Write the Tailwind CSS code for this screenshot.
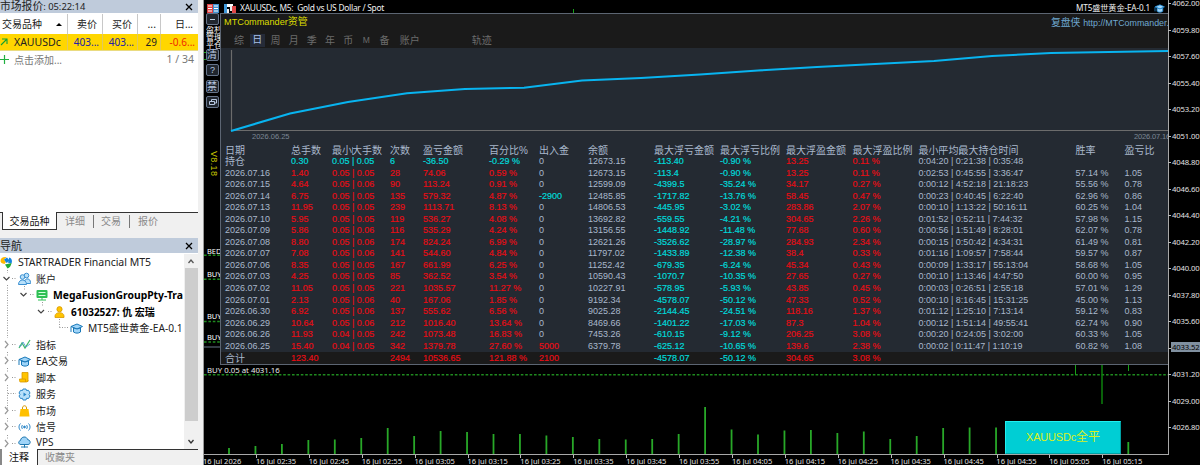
<!DOCTYPE html>
<html lang="zh-CN">

<head>
  <meta charset="UTF-8">
  <meta name="viewport" content="width=device-width, initial-scale=1.0">
  <title>XAUUSDc, M5 - STARTRADER Financial MT5</title>
  <script src="https://cdn.jsdelivr.net/npm/@tailwindcss/browser@4"></script>
</head>

<body class="w-[1200px] h-[465px] overflow-hidden bg-[#f0f0f0] flex font-['Noto_Sans','Noto_Sans_CJK_SC',sans-serif] text-[10.5px] leading-none text-[#222] whitespace-nowrap">

  <!-- left side: market watch + navigator -->
  <aside class="w-[203px] h-full shrink-0 flex flex-col bg-[#f0f0f0]">
    <div class="w-[198px] h-[13px] shrink-0 bg-[#bfcbdb] flex items-center justify-between pr-1">
      <span class="h-[11px] flex items-center text-[#222]"><span class="text-[10.8px] -mt-px">市场报价</span><span class="text-[9.4px]">: 05:22:14</span></span>
      <svg class="w-[8px] h-[8px] mr-px" viewBox="0 0 8 8" stroke="#000" stroke-width="1.3"><path d="M1 1l6 6M7 1l-6 6"/></svg>
    </div>
    <div class="w-[198px] h-[199px] shrink-0 bg-white">
      <div class="h-[21px] grid grid-cols-[68px_35px_35px_23px_36px] items-stretch text-[#222] pt-px">
        <div class="flex items-center justify-between pl-[2px] pr-[5px] border-r border-[#c8c8c8] text-[10px]">交易品种<svg class="w-[6px] h-[3px]" viewBox="0 0 6 3"><path d="M0 3l3-3 3 3z" fill="#000"/></svg></div>
        <div class="flex items-center justify-end pr-[5px] border-r border-[#c8c8c8] text-[10px]">卖价</div>
        <div class="flex items-center justify-end pr-[5px] border-r border-[#c8c8c8] text-[10px]">买价</div>
        <div class="flex items-center justify-end pr-[4px] border-r border-[#c8c8c8]">...</div>
        <div class="flex items-center justify-end pr-[4px] text-[10px]">日...</div>
      </div>
      <div class="h-[17px] grid grid-cols-[68px_35px_35px_23px_37px] bg-[#ffd600] border-b border-[#eadb80]">
        <div class="flex items-center border-r border-[#e0c860]">
          <svg class="w-[8px] h-[8px] mr-[6px]" viewBox="0 0 8 8" fill="none" stroke="#15a030" stroke-width="1.1"><path d="M1 7l6-6M2 1h5v5"/></svg>
          <span>XAUUSDc</span>
        </div>
        <div class="flex items-center justify-end pr-[3px] border-r border-[#e0c860] text-[#2020a8] text-[10px]">403...</div>
        <div class="flex items-center justify-end pr-[3px] border-r border-[#e0c860] text-[#2020a8] text-[10px]">403...</div>
        <div class="flex items-center justify-end pr-[3px] border-r border-[#e0c860] text-[10px]">29</div>
        <div class="flex items-center justify-end pr-[3px] text-[#f02800] text-[10px]">-0.6...</div>
      </div>
      <div class="h-[17px] flex items-center text-[#777]">
        <svg class="w-[9px] h-[9px] mr-[5px]" viewBox="0 0 9 9" stroke="#20b040" stroke-width="1.2"><path d="M0 4.500h9M4.500 0v9"/></svg>
        <span class="text-[10px]">点击添加...</span>
        <span class="ml-auto pr-[4px]">1 / 34</span>
      </div>
    </div>
    <div class="h-[26px] shrink-0 flex items-start text-[10px] text-[#8a8a8a]">
      <div class="w-[2px] h-px bg-[#333]"></div>
      <div class="w-[55px] h-[18px] bg-white border-x border-b border-[#333] text-[#111] flex items-center justify-center">交易品种</div>
      <div class="w-[141px] h-[18px] border-t border-[#333] flex items-center pl-[8px]">
        <span class="w-[29px] h-[13px] border-r border-[#777] leading-[12px]">详细</span>
        <span class="w-[36px] h-[13px] border-r border-[#777] leading-[12px] pl-[7px]">交易</span>
        <span class="pl-[8px] h-[13px] leading-[12px]">报价</span>
      </div>
    </div>

    <div class="w-[198px] h-[15px] shrink-0 bg-[#bfcbdb] flex items-center justify-between pr-1 text-[#222]">
      <span class="text-[11px]">导航</span>
      <svg class="w-[8px] h-[8px] mr-px" viewBox="0 0 8 8" stroke="#000" stroke-width="1.300"><path d="M1 1l6 6M7 1l-6 6"/></svg>
    </div>
    <div class="w-[198px] h-[196px] shrink-0 pt-px flex bg-white">
      <div class="relative w-[184px] h-[195px] overflow-hidden text-[#222]">
        <svg class="absolute left-0 top-0 w-[80px] h-[195px]" fill="none" stroke="#999" stroke-dasharray="1 1.500">
          <path d="M7.500 16v3M7.500 31V84M7.500 98v4M7.500 114v4M7.500 131v24M7.500 164v4M7.500 181v4M24.500 32v4M42.500 48v4M59.500 65v9M59.500 73.500H69M12 24.500h5M30 40.500h4M48 57.500h4M12 90.500h5M12 106.500h5M12 123.500h5M8 139.500h8M12 156.500h5M12 172.500h5M12 189.500h5"/>
        </svg>
        <svg class="absolute left-0 top-0 w-[60px] h-[195px]" fill="none" stroke="#444" stroke-width="1.200">
          <path d="M3.500 23l3 3 3-3M20.500 39l3 3 3-3M38 56l3 3 3-3"/>
          <path stroke="#999" d="M5 87l3 3.500-3 3.500M5 103l3 3.500-3 3.500M5 120l3 3.500-3 3.500M5 153l3 3.500-3 3.500M5 169l3 3.500-3 3.500M5 186l3 3.500-3 3.500"/>
        </svg>
        <div class="h-[16.500px] flex items-center gap-[5px]">
          <svg class="w-[13px] h-[13px]" viewBox="0 0 13 13"><path d="M.5 5C.5 2 3 .500 6.500 1L4 3.500 6 6 4.500 8C2 7.500.5 6.500.5 5z" fill="#ffb800"/><path d="M4 3.500L7 1.500l2.500 3L6.500 7z" fill="#1484e0"/><path d="M7.500 6.500C9.500 5 8 3 9.500 1.500c2.500 1 3 3.500 2 6z" fill="#1484e0"/><path d="M5 8.500l6.500-1.500C11 10 9.500 12 7.500 12.500z" fill="#20a838"/></svg>
          <span class="tracking-[-0.020px]">STARTRADER Financial MT5</span>
        </div>
        <div class="h-[16.500px] flex items-center gap-[5px] pl-[18px]">
          <svg class="w-[13px] h-[13px]" viewBox="0 0 13 13" fill="#b8e0fa" stroke="#3a8fd0"><circle cx="8.500" cy="3.500" r="2.300"/><path d="M6 11.500c0-6 6.500-6 6.500-1v1z"/><circle cx="4.500" cy="5" r="2.300"/><path d="M.5 12.500c0-6 8-6 8 0z"/></svg>
          <span class="text-[10px]">账户</span>
        </div>
        <div class="h-[16.500px] flex items-center gap-[5px] pl-[36px]">
          <svg class="w-[12px] h-[12px]" viewBox="0 0 12 12"><rect x=".5" y="1" width="11" height="8" rx="1" fill="#2fc055"/><path d="M2.500 3.500h7M2.500 6.500h7" stroke="#d8ffe0"/><path d="M6 9v2M2 11h8" stroke="#2fc055"/></svg>
          <span class="font-bold text-black text-[10.350px]">MegaFusionGroupPty-Tra</span>
        </div>
        <div class="h-[16.500px] flex items-center gap-[6px] pl-[54px]">
          <svg class="w-[11px] h-[12px]" viewBox="0 0 11 12" fill="#ffc400" stroke="#d89800" stroke-width=".8"><circle cx="5.500" cy="3.200" r="2.600"/><path d="M1 11.500V10c0-4.500 9-4.500 9 0v1.500z"/></svg>
          <span class="font-bold text-black text-[10px]">61032527: 仇 宏瑞</span>
        </div>
        <div class="h-[16.500px] flex items-center gap-[5px] pl-[70px]">
          <svg class="w-[13px] h-[11px]" viewBox="0 0 13 11" fill="#9fd4f8" stroke="#1878b8"><path d="M1 3.500L7 1l5.500 2.500L7 6z"/><path d="M3.500 5v4c2 1.500 5 1.500 7 0V5L7 6zM1 3.500V9"/></svg>
          <span class="text-[10.200px]">MT5盛世黄金-EA-0.1</span>
        </div>
        <div class="h-[16.500px] flex items-center gap-[5px] pl-[18px]">
          <svg class="w-[13px] h-[11px]" viewBox="0 0 13 11" fill="none" stroke-width="1.200"><path d="M1 9l3-5 3 5 5-8" stroke="#40b868"/><path d="M1 7h2l2-4 3 5 4-3" stroke="#4898d0" stroke-width=".8"/></svg>
          <span class="text-[10px]">指标</span>
        </div>
        <div class="h-[16.500px] flex items-center gap-[5px] pl-[18px]">
          <svg class="w-[13px] h-[11px]" viewBox="0 0 13 11" fill="#9fd4f8" stroke="#1878b8"><path d="M1 3.500L7 1l5.500 2.500L7 6z"/><path d="M3.500 5v4c2 1.500 5 1.500 7 0V5L7 6zM1 3.500V9"/></svg>
          <span class="text-[10px]">EA交易</span>
        </div>
        <div class="h-[16.500px] flex items-center gap-[5px] pl-[18px]">
          <svg class="w-[13px] h-[11px]" viewBox="0 0 13 11" fill="#ffc400" stroke="#d89800" stroke-width=".8"><path d="M4 .500h6v9H4z"/><path d="M1.500 7h6v3H2.500c-1 0-1-1-1-3zM7.500 10c2 0 2.500-.5 2.500-2"/></svg>
          <span class="text-[10px]">脚本</span>
        </div>
        <div class="h-[16.500px] flex items-center gap-[5px] pl-[18px]">
          <svg class="w-[13px] h-[13px]" viewBox="0 0 13 13" fill="#b8e0fa" stroke="#2a86c8"><path d="M5 1h3l.5 1.500 2-.2L12 5l-1 1.500L12 8l-1.500 2.500-2-.2L8 12H5l-.5-1.700-2 .2L1 8l1-1.500L1 5l1.500-2.700 2 .2z"/><path d="M5.500 4.500l3 2-3 2z" fill="#2a86c8" stroke="none"/></svg>
          <span class="text-[10px]">服务</span>
        </div>
        <div class="h-[16.500px] flex items-center gap-[5px] pl-[18px]">
          <svg class="w-[13px] h-[12px]" viewBox="0 0 13 12"><path d="M4.500 5V3c0-3 4-3 4 0v2" fill="none" stroke="#d89800"/><path d="M2.500 4h8l1 7.500h-10z" fill="#ffc000"/></svg>
          <span class="text-[10px]">市场</span>
        </div>
        <div class="h-[16.500px] flex items-center gap-[5px] pl-[18px]">
          <svg class="w-[13px] h-[10px]" viewBox="0 0 13 10" fill="none" stroke="#2a86c8"><path d="M2.500 1.500c-2 2-2 5 0 7M10.500 1.500c2 2 2 5 0 7M4.500 3c-1 1-1 3 0 4M8.500 3c1 1 1 3 0 4"/><circle cx="6.500" cy="5" r=".9" fill="#2a86c8"/></svg>
          <span class="text-[10px]">信号</span>
        </div>
        <div class="h-[13px] flex items-center gap-[5px] pl-[18px]">
          <svg class="w-[13px] h-[12px]" viewBox="0 0 13 12" fill="#9fd4f8" stroke="#2078b0"><path d="M3 8.500C0 8.500 0 5 2.500 4.500 3 0 9 0 9.500 3.500 13 4 13 8.500 10 8.500z"/><path d="M6.500 8.500v3M3 11h7"/></svg>
          <span class="text-[10px]">VPS</span>
        </div>
      </div>
      <div class="w-[14px] h-[195px] bg-[#f0f0f0] flex flex-col items-center">
        <svg class="w-[6px] h-[14px]" viewBox="0 0 6 14" fill="none" stroke="#555" stroke-width="1.300"><path d="M.5 9L3 6l2.500 3"/></svg>
        <div class="w-[13px] h-[153px] bg-[#cdcdcd]"></div>
        <svg class="w-[6px] h-[14px] mt-auto" viewBox="0 0 6 14" fill="none" stroke="#333" stroke-width="1.300"><path d="M.5 5L3 8l2.500-3"/></svg>
      </div>
    </div>
    <div class="h-[16px] shrink-0 flex text-[10px]">
      <div class="w-[38px] pl-[7px] bg-white border-r border-[#333] border-l-2 border-l-[#888] text-[#111] leading-[16px]">注释</div>
      <div class="w-[160px] border-t border-[#333] pl-[7px] leading-[15px] text-[#8a8a8a]">收藏夹</div>
    </div>
  </aside>

  <!-- chart window -->
  <main class="relative w-[997px] h-full bg-black flex flex-col border-l border-[#999] font-['Liberation_Sans','Noto_Sans_CJK_SC',sans-serif]">
    <!-- candles, volumes and order lines under the panel -->
    <svg id="plot" class="absolute left-0 top-0 w-[996px] h-[465px]" viewBox="204 0 996 465">
      <g stroke="#1f8a1f" stroke-width="1.500" stroke-dasharray="2.600 1.800">
        <path d="M204 374.800H1168M204 255.300h16M204 279.300h16M204 321.500h16M204 342h16"/>
      </g>
      <path d="M204 52.500h3M204 59.500h3" stroke="#18a018"/>
      <path d="M203 347h17" stroke="#667788"/>
      <path d="M1075.500 364v11M1128.500 364v7M573.500 9v4" stroke="#18a018"/>
      <path d="M1102 364v40" stroke="#0c800c" stroke-width="1.500"/>
      <path d="M1168 0V454.500M204 454.500h964" stroke="#a8a8a8" shape-rendering="crispEdges"/>
      <g id="volumes" stroke="#28a828" stroke-width="1.800"></g>
      <g id="ticks" stroke="#bbb" shape-rendering="crispEdges"></g>
    </svg>

    <header class="relative h-[13px] w-[964px] flex items-center pl-[3px] text-[#f0f0f0] font-['Noto_Sans','Noto_Sans_CJK_SC',sans-serif]">
      <svg class="w-[12px] h-[9px] mt-[3px]" viewBox="0 0 12 9"><path d="M0 0h6v9H0z" fill="#e04040"/><path d="M6 0h6v9H6z" fill="#4090d0"/><path d="M1 2h4M1 4.500h4M1 7h4M7 2h4M7 4.500h4M7 7h4" stroke="#fff"/></svg>
      <svg class="w-[12px] h-[9px] mt-[3px] ml-[5px]" viewBox="0 0 12 9"><path d="M0 0h3v9H0z" fill="#4098d8"/><path d="M3 0h6v3H3z" fill="#fff"/><path d="M8 2h4v7H8z" fill="#e04848"/><path d="M3 5h2v4H3zM6 2h2v5H6z" fill="#eee"/></svg>
      <span class="ml-[4px] mt-[4px] text-[8.400px] tracking-[-0.250px]">XAUUSDc, M5:&nbsp; Gold vs US Dollar / Spot</span>
      <span class="ml-auto mt-[4px] text-[8.200px] tracking-[-0.150px]">MT5盛世黄金-EA-0.1</span>
      <svg class="w-[11px] h-[9px] ml-[4px] mr-[3px] mt-[4px]" viewBox="0 0 13 11" fill="#9fd4f8" stroke="#2088d0"><path d="M1 3.500L7 1l5.500 2.500L7 6z"/><path d="M3.500 5v4c2 1.500 5 1.500 7 0V5L7 6zM1 3.500V9"/></svg>
    </header>

    <!-- tool strip at the left of the panel -->
    <div class="absolute left-[2px] top-[13px] w-[14px] h-[100px] text-[#b8c8e0]">
      <div class="w-[13px] h-[12px] border border-[#66748a] rounded-xs bg-[#20262e] flex items-center justify-center"><svg class="w-[5px] h-px bg-[#c0d0e0]"></svg></div>
      <div class="w-[14px] h-[23px] mt-px overflow-hidden text-[8px] leading-[8px] text-white">盈利<br>管理<br>平仓</div>
      <div class="w-[13px] h-[12px] border border-[#66748a] rounded-xs bg-[#20262e] text-[10px] leading-[10px]">清</div>
      <div class="w-[13px] h-[12px] mt-[3px] border border-[#66748a] rounded-xs bg-[#20262e] text-[9px] leading-[10px] text-center">?</div>
      <div class="w-[13px] h-[13px] mt-[4px] border border-[#66748a] rounded-xs bg-[#20262e] text-[10px] leading-[11px]">禁</div>
      <div class="w-[13px] h-[12px] mt-[3px] border border-[#66748a] rounded-xs bg-[#20262e] flex items-center justify-center"><svg class="w-[8px] h-[8px]" viewBox="0 0 8 8" fill="none" stroke="#b8c8e0"><path d="M.5 3.500h5v3h-5zM2.500 3V1.500h5v3.500H6"/></svg></div>
    </div>
    <div class="absolute left-[5px] top-[151px] text-[#c8c800] text-[9px] tracking-[0.350px] [writing-mode:vertical-rl]">V8.18</div>
    <div class="absolute left-[3px] top-[247px] w-[13px] overflow-hidden text-[7.500px] text-white font-['Noto_Sans',sans-serif] leading-[8px]">BED</div>
    <div class="absolute left-[3px] top-[270px] w-[13px] overflow-hidden text-[7.500px] text-white font-['Noto_Sans',sans-serif] leading-[8px]">BUY</div>
    <div class="absolute left-[3px] top-[312px] w-[13px] overflow-hidden text-[7.500px] text-white font-['Noto_Sans',sans-serif] leading-[8px]">BUY</div>
    <div class="absolute left-[3px] top-[333px] w-[13px] overflow-hidden text-[7.500px] text-white font-['Noto_Sans',sans-serif] leading-[8px]">BUY</div>
    <div class="absolute left-[3px] top-[366px] text-[7.800px] text-[#e8e8e8] font-['Noto_Sans',sans-serif] leading-[8px]">BUY 0.05 at 4031.16</div>

    <!-- account panel -->
    <section class="relative ml-[16px] w-[948px] h-[352px] border-l border-y border-[#5c6572] bg-[#242a32] flex flex-col overflow-hidden text-[#a9b8cc]">
      <div class="h-[34px] shrink-0 bg-[#1a1a1a]">
        <div class="h-[17px] flex items-center justify-between pl-[3px]">
          <span class="text-[#dede00] text-[10px]"><span class="text-[9.200px]">MTCommander</span>资管</span>
          <span class="w-[117px] overflow-hidden text-[#6fa8d0] text-[9.800px] leading-[14px]">复盘侠 <span class="text-[8.900px]">http://MTCommander.com</span></span>
        </div>
        <nav class="h-[19px] flex items-center text-[#6c6c6c] text-[10px] pl-[9px]">
          <span class="w-[18.200px] text-center">综</span>
          <span class="w-[18.200px] flex justify-center"><span class="w-[15px] h-[13px] leading-[12px] text-center bg-[#252b38] text-[#a8c0e8]">日</span></span>
          <span class="w-[18.200px] text-center">周</span>
          <span class="w-[18.200px] text-center">月</span>
          <span class="w-[18.200px] text-center">季</span>
          <span class="w-[18.200px] text-center">年</span>
          <span class="w-[18.200px] text-center">币</span>
          <span class="w-[18.200px] text-center text-[8.500px]">M</span>
          <span class="w-[18.200px] text-center">备</span>
          <span class="ml-[6px]">账户</span>
          <span class="ml-[52px]">轨迹</span>
        </nav>
      </div>
      <svg class="w-[947px] h-[85px] shrink-0" viewBox="221 48 947 85" fill="none">
        <path d="M231.500 50V130.500H1168" stroke="#6c6c6c" stroke-width="1.200"/>
        <polyline stroke="#08b4f0" stroke-width="2.100" points="231,131 290,113.500 348,102 407,93.300 465,89 524,87.700 582,80.500 641,78 700,74.500 758,70.500 817,67 875,64 934,61 992,56 1051,53 1109,52 1168,51"/>
      </svg>
      <div class="h-[12px] shrink-0 flex justify-between pl-[31px] text-[7.500px] leading-[8px] text-[#7d8896]"><span>2026.06.25</span><span class="w-[34px] overflow-hidden tracking-[-0.150px]">2026.07.16</span></div>
      <div id="head" class="h-[11px] shrink-0 pl-[4px] grid grid-cols-[66px_41px_58px_33px_66px_50px_49px_66px_66px_66px_66.500px_66px_157px_49px_40px] items-center text-[10px] leading-[11px]"></div>
      <div id="rows" class="text-[9px]"></div>
    </section>

    <button class="absolute left-[801px] top-[421px] w-[116px] h-[33px] bg-[#00ced4] border-t border-l border-[#20f0f0] border-r border-b border-r-[#00a0a4] border-b-[#00a0a4] text-[#d8f020] text-[12px] leading-[31px]"><span class="text-[11px] tracking-[-0.200px]">XAUUSDc</span>全平</button>

    <div id="prices" class="absolute left-[968px] top-[-10px] text-[#e0e0e0] text-[7.700px] tracking-[-0.150px] font-['Noto_Sans',sans-serif]"></div>
    <div class="absolute left-[967px] top-[342px] w-[29px] h-[10px] bg-[#8090a0] text-black pl-px text-[7.700px] tracking-[-0.150px] leading-[10px] font-['Noto_Sans',sans-serif]">4033.52</div>
    <div id="times" class="absolute left-[-1px] top-[456px] h-[9px] flex text-[#e0e0e0] text-[7.500px] leading-[10px] font-['Noto_Sans',sans-serif]"></div>
  </main>
</body>
<script>
  const $ = (tag) => document.querySelector(tag);

  const titles = ['日期', '总手数', '最小|大手数', '次数', '盈亏金额', '百分比%', '出入金', '余额', '最大浮亏金额', '最大浮亏比例', '最大浮盈金额', '最大浮盈比例', '最小|平均|最大持仓时间', '胜率', '盈亏比'];
  const days = [
    ['持仓', '0.30', '0.05 | 0.05', '6', '-36.50', '-0.29 %', '0', '12673.15', '-113.40', '-0.90 %', '13.25', '0.11 %', '0:04:20 | 0:21:38 | 0:35:48', '', ''],
    ['2026.07.16', '1.40', '0.05 | 0.05', '28', '74.06', '0.59 %', '0', '12673.15', '-113.4', '-0.90 %', '13.25', '0.11 %', '0:02:53 | 0:45:55 | 3:36:47', '57.14 %', '1.05'],
    ['2026.07.15', '4.64', '0.05 | 0.06', '90', '113.24', '0.91 %', '0', '12599.09', '-4399.5', '-35.24 %', '34.17', '0.27 %', '0:00:12 | 4:52:18 | 21:18:23', '55.56 %', '0.78'],
    ['2026.07.14', '6.75', '0.05 | 0.05', '135', '579.32', '4.87 %', '-2900', '12485.85', '-1717.82', '-13.76 %', '58.45', '0.47 %', '0:00:23 | 0:40:45 | 6:22:40', '62.96 %', '0.86'],
    ['2026.07.13', '11.95', '0.05 | 0.05', '239', '1113.71', '8.13 %', '0', '14806.53', '-445.95', '-3.02 %', '283.86', '2.07 %', '0:00:10 | 1:13:22 | 50:16:11', '60.25 %', '1.04'],
    ['2026.07.10', '5.95', '0.05 | 0.05', '119', '536.27', '4.08 %', '0', '13692.82', '-559.55', '-4.21 %', '304.65', '2.26 %', '0:01:52 | 0:52:11 | 7:44:32', '57.98 %', '1.15'],
    ['2026.07.09', '5.86', '0.05 | 0.06', '116', '535.29', '4.24 %', '0', '13156.55', '-1448.92', '-11.48 %', '77.68', '0.60 %', '0:00:56 | 1:51:49 | 8:28:01', '62.07 %', '0.78'],
    ['2026.07.08', '8.80', '0.05 | 0.06', '174', '824.24', '6.99 %', '0', '12621.26', '-3526.62', '-28.97 %', '284.93', '2.34 %', '0:00:15 | 0:50:42 | 4:34:31', '61.49 %', '0.81'],
    ['2026.07.07', '7.08', '0.05 | 0.06', '141', '544.60', '4.84 %', '0', '11797.02', '-1433.89', '-12.38 %', '38.4', '0.33 %', '0:01:16 | 1:09:57 | 7:58:44', '59.57 %', '0.87'],
    ['2026.07.06', '8.35', '0.05 | 0.05', '167', '661.99', '6.25 %', '0', '11252.42', '-679.35', '-6.24 %', '45.34', '0.43 %', '0:00:09 | 1:33:17 | 55:13:04', '58.68 %', '1.05'],
    ['2026.07.03', '4.25', '0.05 | 0.05', '85', '362.52', '3.54 %', '0', '10590.43', '-1070.7', '-10.35 %', '27.65', '0.27 %', '0:00:10 | 1:13:46 | 4:47:50', '60.00 %', '0.95'],
    ['2026.07.02', '11.05', '0.05 | 0.05', '221', '1035.57', '11.27 %', '0', '10227.91', '-578.95', '-5.93 %', '43.85', '0.45 %', '0:00:03 | 0:26:51 | 2:55:18', '57.01 %', '1.29'],
    ['2026.07.01', '2.13', '0.05 | 0.06', '40', '167.06', '1.85 %', '0', '9192.34', '-4578.07', '-50.12 %', '47.33', '0.52 %', '0:00:10 | 8:16:45 | 15:31:25', '45.00 %', '1.13'],
    ['2026.06.30', '6.92', '0.05 | 0.06', '137', '555.62', '6.56 %', '0', '9025.28', '-2144.45', '-24.51 %', '118.16', '1.37 %', '0:01:12 | 1:25:10 | 7:13:14', '59.12 %', '0.83'],
    ['2026.06.29', '10.64', '0.05 | 0.06', '212', '1016.40', '13.64 %', '0', '8469.66', '-1401.22', '-17.03 %', '87.3', '1.04 %', '0:00:12 | 1:51:14 | 49:55:41', '62.74 %', '0.90'],
    ['2026.06.26', '11.93', '0.04 | 0.05', '242', '1073.48', '16.83 %', '0', '7453.26', '-610.15', '-9.12 %', '206.25', '3.08 %', '0:00:20 | 0:24:05 | 3:02:00', '60.33 %', '1.05'],
    ['2026.06.25', '15.40', '0.04 | 0.05', '342', '1379.78', '27.60 %', '5000', '6379.78', '-625.12', '-10.65 %', '139.6', '2.38 %', '0:00:02 | 0:11:47 | 1:10:19', '60.82 %', '1.08'],
    ['合计', '123.40', '', '2494', '10536.65', '121.88 %', '2100', '', '-4578.07', '-50.12 %', '304.65', '3.08 %', '', '', '']
  ];

  // losses are cyan, gains are red, everything else keeps the panel colour
  function cellClass(col, text, row) {
    if (col === 0 || col === 7 || col > 11 || text === '0') return '';
    if (text[0] === '-' || (row === 0 && col < 6)) return 'text-[#00d8d8] [-webkit-text-stroke:0.2px]';
    return 'text-[#e80c14] [-webkit-text-stroke:0.15px]';
  }

  $('#head').innerHTML = titles.map((t) => {
    const bars = t.replaceAll('|', '<i class="inline-block align-middle w-px h-[8px] -mr-px bg-[#55779c]"></i>');
    return `<span class="h-[11px]">${bars}</span>`;
  }).join('');

  days.forEach((day, row) => {
    const line = document.createElement('div');
    line.className = 'h-[11.56px] pl-[4px] grid grid-cols-[66px_41px_58px_33px_66px_50px_49px_66px_66px_66px_66.500px_66px_157px_49px_40px] leading-[11.56px]';
    if (row === days.length - 1) {
      line.className += ' bg-[#1a1a1a] pt-px';
    }
    line.innerHTML = day.map((text, col) => {
      const size = col === 0 && (row === 0 || row === days.length - 1) ? 'text-[10px]' : '';
      return `<span class="${cellClass(col, text, row)} ${size}">${text}</span>`;
    }).join('');
    $('#rows').appendChild(line);
  });

  // tick volumes, one bar per 26.45px
  const tops = [448, 446, 444, 440, 439.5, 438, 428, 436, 431, 432, 434, 434, 435.5, 437, 439, 439.5, 439, 434, 407, 429.5, 434.5, 430.5, 430, 433, 431.5, 439, 436, 428, 427.5, 427.5, 430, 430, 430, 430, 442];
  $('#volumes').innerHTML = tops.map((y, i) => `<path d="M${229 + i * 26.45} ${y}V454"/>`).join('');

  const times = ['2026', '02:35', '02:45', '02:55', '03:05', '03:15', '03:25', '03:35', '03:45', '03:55', '04:05', '04:15', '04:25', '04:35', '04:45', '04:55', '05:05', '05:15'];
  $('#times').innerHTML = times.map((t) => `<span class="w-[52.9px] shrink-0">16 Jul ${t}</span>`).join('');

  let ticks = times.map((t, i) => `<path d="M${203.5 + i * 52.9} 455v3"/>`).join('');
  for (let i = 0; i < 17; i++) {
    const price = (4062 - i * 2.2).toFixed(2);
    ticks += `<path d="M1168 ${3.5 + i * 26.5}h3"/>`;
    $('#prices').innerHTML += `<div class="h-[26.5px] leading-[26.5px]">${i === 13 ? '' : price}</div>`;
  }
  $('#ticks').innerHTML = ticks;
</script>

</html>
